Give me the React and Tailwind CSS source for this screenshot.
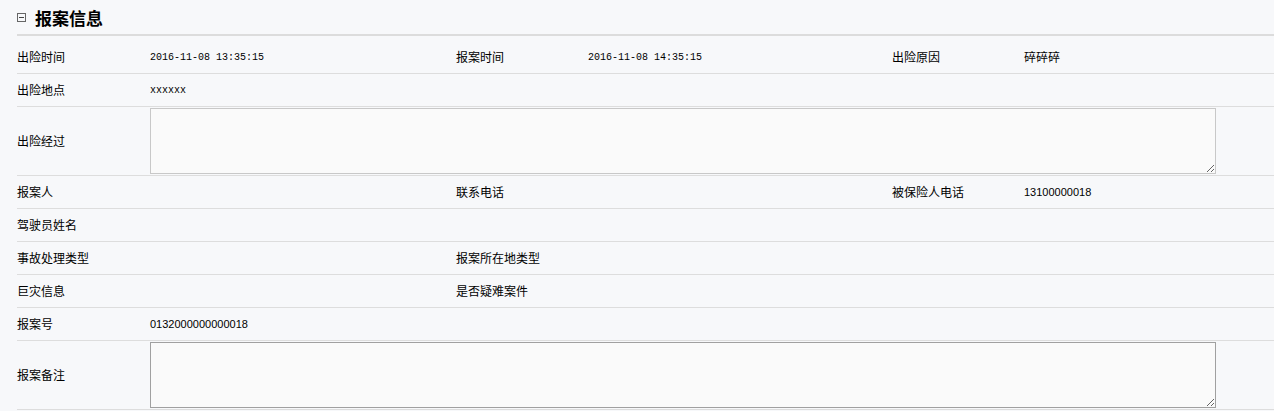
import React from "react";

const cjk = { fontFamily: '"Noto Sans CJK SC", "Noto Sans", sans-serif' };
const mono = { fontFamily: '"Liberation Mono", "Noto Sans CJK SC", monospace' };
const sans = { fontFamily: '"Liberation Sans", Arial, sans-serif' };

function Label({ children }) {
  return (
    <div className="flex items-center text-[12px] text-black" style={cjk}>
      {children}
    </div>
  );
}

function Value({ children, font = "cjk" }) {
  const style = font === "mono" ? mono : font === "sans" ? sans : cjk;
  const size = font === "mono" ? "text-[10px]" : font === "sans" ? "text-[11px]" : "text-[12px]";
  return (
    <div className={`flex items-center text-black ${size}`} style={style}>
      {children}
    </div>
  );
}

function Row({ children, tall }) {
  return (
    <div
      className={`grid grid-cols-[133px_306px_132px_304px_132px_1fr] border-b border-[#dddddd] ${
        tall ? "h-[69px]" : "h-[33px]"
      }`}
    >
      {children}
    </div>
  );
}

function AreaRow({ label, dark }) {
  return (
    <Row tall>
      <Label>{label}</Label>
      <div className="col-span-5 pt-px">
        <textarea
          className={`block w-[1066px] h-[66px] bg-[#fafafa] border outline-none ${
            dark ? "border-[#a0a0a0]" : "border-[#c8c8c8]"
          }`}
        />
      </div>
    </Row>
  );
}

export default function App() {
  return (
    <div className="min-h-[411px] bg-[#f7f8fa] pl-[17px] overflow-hidden">
      {/* header */}
      <div className="h-[36px] flex items-center border-b-2 border-[#dcdcdc]">
        <div className="w-[9px] h-[9px] border border-[#666] flex items-center justify-center mt-px">
          <div className="w-[5px] h-px bg-[#444]" />
        </div>
        <h2 className="ml-[9px] text-[17px] font-bold text-black leading-none" style={cjk}>
          报案信息
        </h2>
      </div>

      <div className="mt-[5px]">
        <Row>
          <Label>出险时间</Label>
          <Value font="mono">2016-11-08 13:35:15</Value>
          <Label>报案时间</Label>
          <Value font="mono">2016-11-08 14:35:15</Value>
          <Label>出险原因</Label>
          <Value>碎碎碎</Value>
        </Row>
        <Row>
          <Label>出险地点</Label>
          <Value font="mono">xxxxxx</Value>
        </Row>
        <AreaRow label="出险经过" />
        <Row>
          <Label>报案人</Label>
          <Value />
          <Label>联系电话</Label>
          <Value />
          <Label>被保险人电话</Label>
          <Value font="sans">13100000018</Value>
        </Row>
        <Row>
          <Label>驾驶员姓名</Label>
        </Row>
        <Row>
          <Label>事故处理类型</Label>
          <Value />
          <Label>报案所在地类型</Label>
        </Row>
        <Row>
          <Label>巨灾信息</Label>
          <Value />
          <Label>是否疑难案件</Label>
        </Row>
        <Row>
          <Label>报案号</Label>
          <Value font="sans">0132000000000018</Value>
        </Row>
        <AreaRow label="报案备注" dark />
      </div>
    </div>
  );
}
